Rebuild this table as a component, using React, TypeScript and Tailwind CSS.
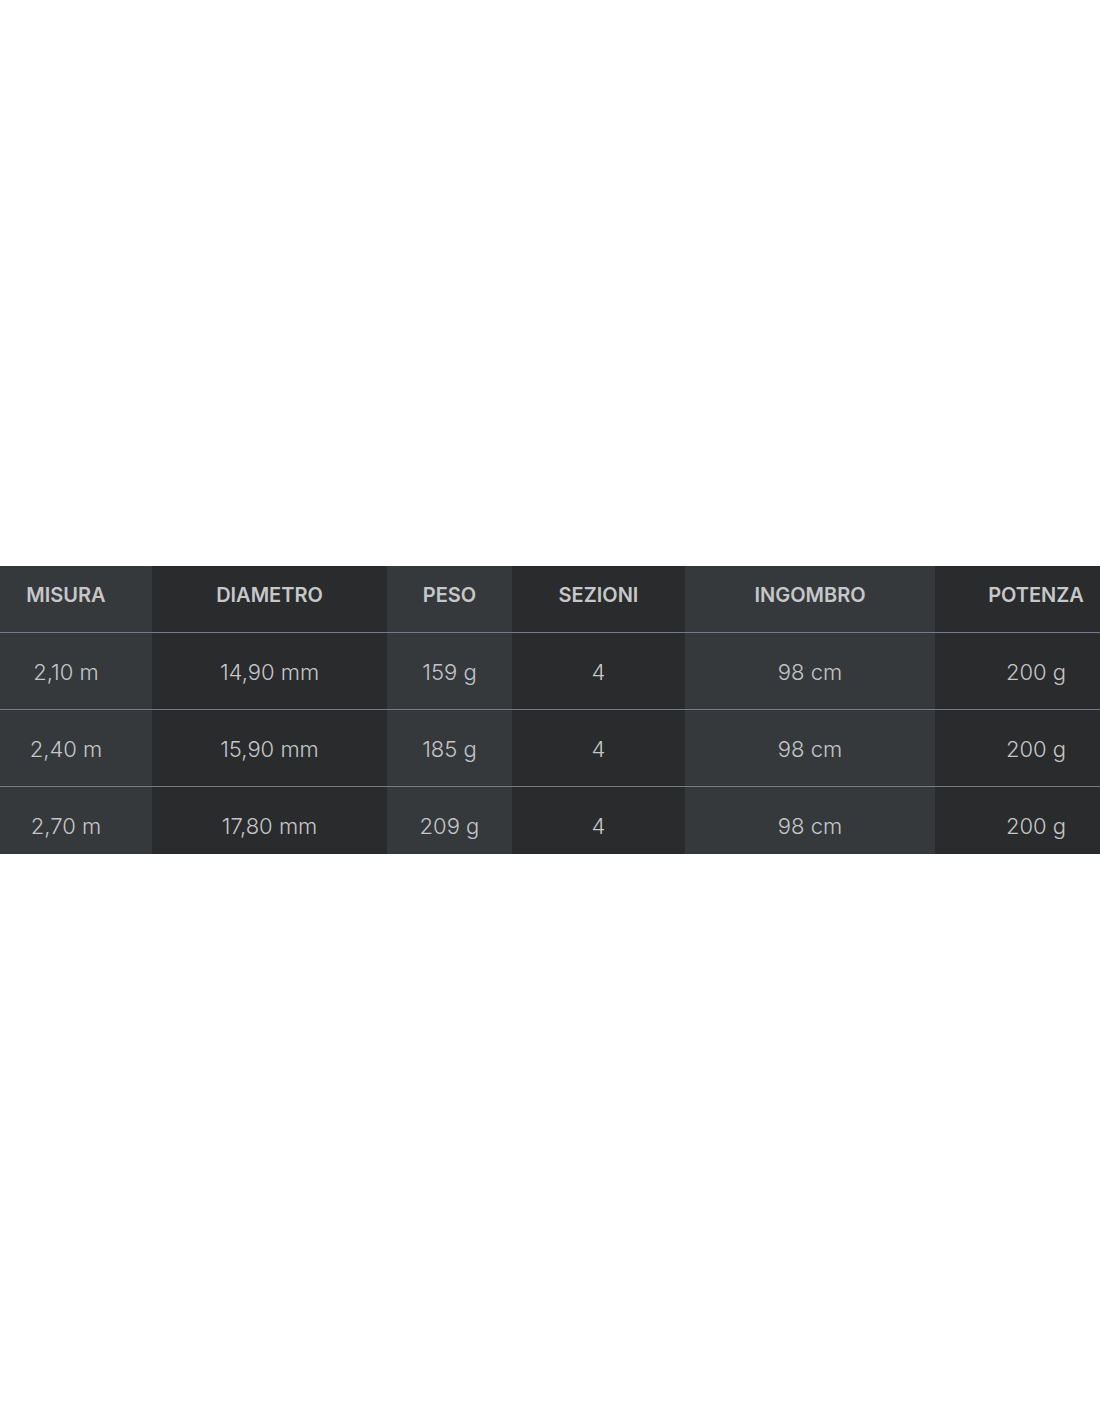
const columns = [
  { label: 'MISURA', width: 'w-[152px] pr-[20px]', light: true },
  { label: 'DIAMETRO', width: 'w-[235px]', light: false },
  { label: 'PESO', width: 'w-[125px]', light: true },
  { label: 'SEZIONI', width: 'w-[173px]', light: false },
  { label: 'INGOMBRO', width: 'w-[250px]', light: true },
  { label: 'POTENZA', width: 'w-[202px]', light: false },
];

const rows = [
  ['2,10 m', '14,90 mm', '159 g', '4', '98 cm', '200 g'],
  ['2,40 m', '15,90 mm', '185 g', '4', '98 cm', '200 g'],
  ['2,70 m', '17,80 mm', '209 g', '4', '98 cm', '200 g'],
];

export default function App() {
  return (
    <div className="min-h-[1422px] w-full bg-white pt-[566px] overflow-hidden" style={{ fontFamily: 'Inter, "Noto Sans", sans-serif' }}>
      <div className="w-[1137px]">
        {/* header */}
        <div className="flex h-[67px] border-b border-[#767a8e]">
          {columns.map((c) => (
            <div
              key={c.label}
              className={`${c.width} flex items-start justify-center pt-[14px] text-[20px] font-semibold text-[#c6c7c9] ${c.light ? 'bg-[#36393c]' : 'bg-[#2a2b2d]'}`}
            >
              {c.label}
            </div>
          ))}
        </div>
        {rows.map((row, ri) => (
          <div
            key={ri}
            className={`flex ${ri < rows.length - 1 ? 'h-[77px] border-b border-[#767a8e]' : 'h-[67px]'}`}
          >
            {row.map((cell, ci) => (
              <div
                key={ci}
                className={`${columns[ci].width} flex items-start justify-center pt-[23px] text-[22px] font-light text-[#c4c5c7] ${columns[ci].light ? 'bg-[#36393c]' : 'bg-[#2a2b2d]'}`}
              >
                {cell}
              </div>
            ))}
          </div>
        ))}
      </div>
    </div>
  );
}
